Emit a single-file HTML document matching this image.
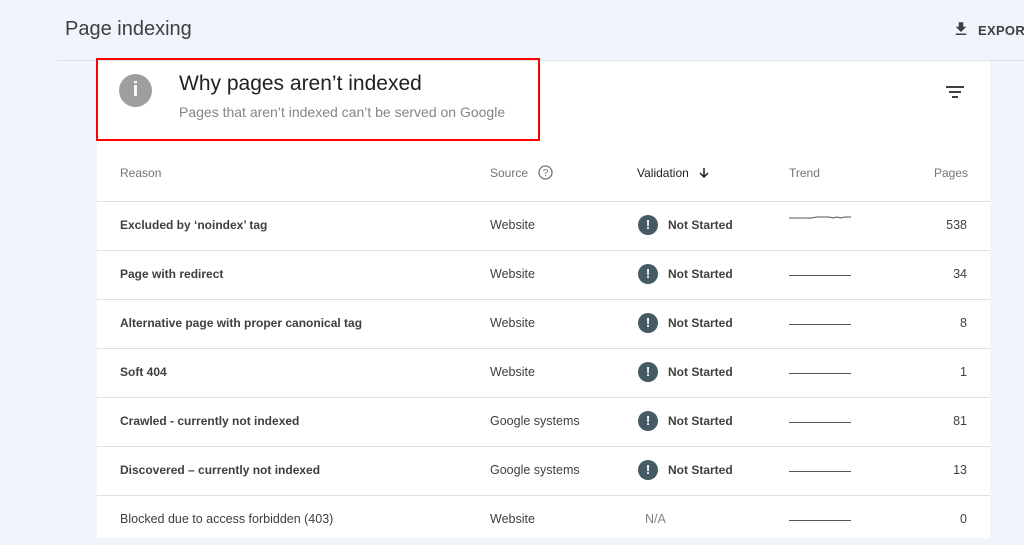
<!DOCTYPE html>
<html><head><style>
body{margin:0;width:1024px;height:538px;overflow:hidden;background:#f1f4fb;font-family:"Liberation Sans",Arial,sans-serif;position:relative}
.t{position:absolute;left:65px;top:18px;font-size:20px;color:#3c4043}
.hl{position:absolute;left:57px;top:60px;width:967px;height:1px;background:#dde1e8}
.exp{position:absolute;left:952px;top:20px;font-size:13px;color:#3c4043;font-weight:bold;letter-spacing:.3px;white-space:nowrap}
.card{position:absolute;left:97px;top:61px;width:893px;height:477px;background:#fff}
.red{position:absolute;left:96px;top:58px;width:440px;height:79px;border:2.5px solid #f00;box-sizing:content-box}
.info{position:absolute;left:119px;top:74px;width:33px;height:33px;border-radius:50%;background:#9e9e9e;color:#fff;text-align:center;font-weight:bold;font-size:20px;line-height:33px}
.h2{position:absolute;left:179px;top:72px;font-size:21px;color:#202124}
.sub{position:absolute;left:179px;top:104px;font-size:14px;color:#80868b}
.row{position:absolute;left:97px;width:893px;height:49px;border-top:1px solid #e0e0e0;font-size:12.5px;color:#3c4043}
.row span{position:absolute;top:16px}
.row .b{font-weight:bold;color:#3c4043;font-size:12px}
.hdr{position:absolute;top:166px;font-size:12px;color:#70757a;white-space:nowrap}
.bang{position:absolute;left:541px;top:13px;width:20px;height:20px;border-radius:50%;background:#455a64;color:#fff;font-weight:bold;font-size:13px;text-align:center;line-height:20px}
.tr{position:absolute;left:692px;top:24px;width:62px;height:1px;background:#555}
</style></head><body>
<div class="t">Page indexing</div>
<div class="exp"><svg width="18" height="18" viewBox="0 0 24 24" style="vertical-align:-3px;margin-right:8px"><path d="M19 9h-4V3H9v6H5l7 7 7-7zM5 18v2h14v-2H5z" fill="#3c4043"/></svg>EXPOR</div>
<div class="hl"></div>
<div class="card"></div>
<div class="red"></div>
<div class="info">i</div>
<div class="h2">Why pages aren’t indexed</div>
<div class="sub">Pages that aren’t indexed can’t be served on Google</div>
<svg style="position:absolute;left:946px;top:85px" width="18" height="14" viewBox="0 0 18 14"><path d="M0 2h18M3 7h12M6 12h6" stroke="#3c4043" stroke-width="2"/></svg>
<div class="hdr" style="left:120px">Reason</div>
<div class="hdr" style="left:490px">Source</div>
<svg style="position:absolute;left:538px;top:165px" width="15" height="15" viewBox="0 0 15 15"><circle cx="7.5" cy="7.5" r="6.5" fill="none" stroke="#70757a" stroke-width="1.3"/><text x="7.5" y="11" text-anchor="middle" font-size="10" fill="#70757a" font-family="Liberation Sans">?</text></svg>
<div class="hdr" style="left:637px;color:#202124">Validation</div>
<svg style="position:absolute;left:698px;top:167px" width="12" height="12" viewBox="0 0 12 12"><path d="M6 1v9M2 6l4 4 4-4" fill="none" stroke="#202124" stroke-width="1.5"/></svg>
<div class="hdr" style="left:789px">Trend</div>
<div class="hdr" style="left:934px">Pages</div>
<div class="row" style="top:201px"><span class="b" style="left:23px">Excluded by ‘noindex’ tag</span><span style="left:393px">Website</span><div class="bang">!</div><span class="b" style="left:571px">Not Started</span><svg style="position:absolute;left:692px;top:10px" width="62" height="8"><path d="M0 6H22L28 5H40L44 6L48 5L52 6L56 5H62" fill="none" stroke="#555" stroke-width="1"/></svg><span style="right:23px">538</span></div>
<div class="row" style="top:250px"><span class="b" style="left:23px">Page with redirect</span><span style="left:393px">Website</span><div class="bang">!</div><span class="b" style="left:571px">Not Started</span><div class="tr"></div><span style="right:23px">34</span></div>
<div class="row" style="top:299px"><span class="b" style="left:23px">Alternative page with proper canonical tag</span><span style="left:393px">Website</span><div class="bang">!</div><span class="b" style="left:571px">Not Started</span><div class="tr"></div><span style="right:23px">8</span></div>
<div class="row" style="top:348px"><span class="b" style="left:23px">Soft 404</span><span style="left:393px">Website</span><div class="bang">!</div><span class="b" style="left:571px">Not Started</span><div class="tr"></div><span style="right:23px">1</span></div>
<div class="row" style="top:397px"><span class="b" style="left:23px">Crawled - currently not indexed</span><span style="left:393px">Google systems</span><div class="bang">!</div><span class="b" style="left:571px">Not Started</span><div class="tr"></div><span style="right:23px">81</span></div>
<div class="row" style="top:446px"><span class="b" style="left:23px">Discovered – currently not indexed</span><span style="left:393px">Google systems</span><div class="bang">!</div><span class="b" style="left:571px">Not Started</span><div class="tr"></div><span style="right:23px">13</span></div>
<div class="row" style="top:495px"><span style="left:23px">Blocked due to access forbidden (403)</span><span style="left:393px">Website</span><span style="left:548px;color:#80868b">N/A</span><div class="tr"></div><span style="right:23px">0</span></div>
</body></html>
